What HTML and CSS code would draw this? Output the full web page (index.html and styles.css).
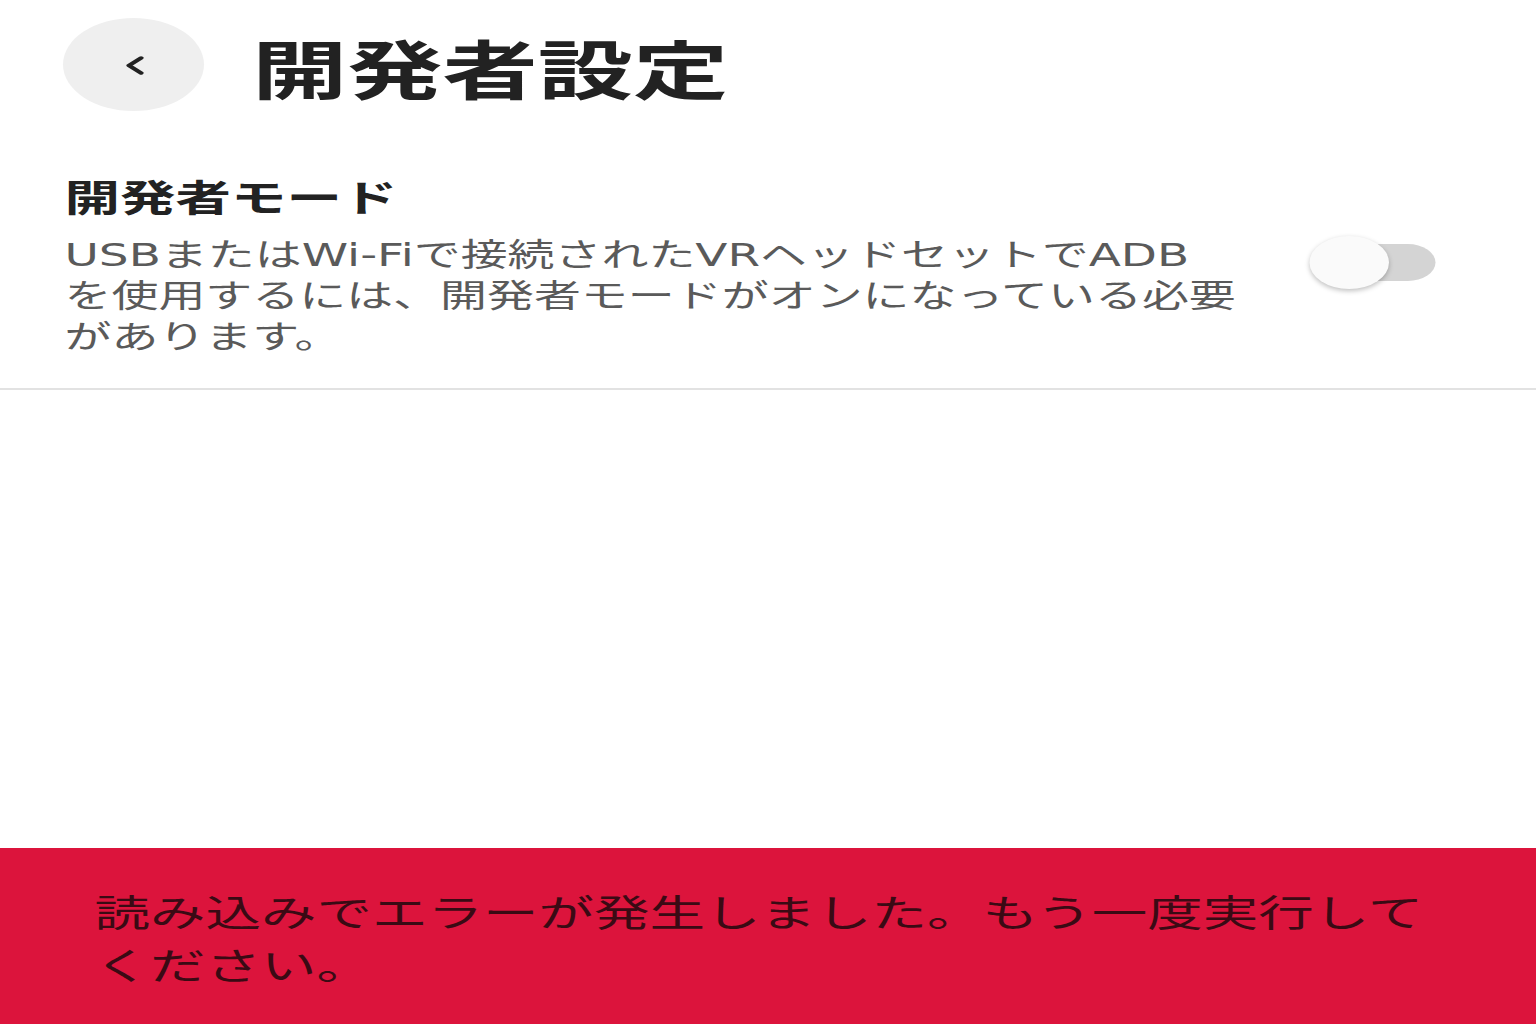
FILE: index.html
```html
<!DOCTYPE html>
<html lang="ja">
<head>
  <meta charset="UTF-8">
  <title>開発者設定</title>
  <link rel="stylesheet" href="styles.css">
</head>
<body>
<div class="screen">
  <header class="topbar">
    <button class="back-btn" aria-label="戻る">
      <svg width="16" height="20" viewBox="0 0 16 20">
        <polyline points="12,3 4,10.5 12,18" fill="none" stroke="#222" stroke-width="3.4" stroke-linecap="round" stroke-linejoin="round"/>
      </svg>
    </button>
    <h1 class="page-title">開発者設定</h1>
  </header>

  <section class="setting-row">
    <div class="setting-text">
      <h2 class="setting-name">開発者モード</h2>
      <p class="setting-desc">USBまたはWi-Fiで接続されたVRヘッドセットでADB<br>を使用するには、開発者モードがオンになっている必要があります。</p>
    </div>
    <div class="toggle">
      <span class="toggle-track"></span>
      <span class="toggle-thumb"></span>
    </div>
  </section>

  <div class="error-banner">
    <p>読み込みでエラーが発生しました。もう一度実行してください。</p>
  </div>
</div>
</body>
</html>
```

FILE: styles.css
```css
html, body {
  margin: 0;
  padding: 0;
  background: #ffffff;
  overflow: hidden;
}
.screen {
  width: 1024px;
  height: 1024px;
  transform: scaleX(1.5);
  transform-origin: 0 0;
  display: flex;
  flex-direction: column;
  font-family: "Noto Sans CJK JP", "Noto Sans", sans-serif;
  color: #222222;
}

.topbar {
  display: flex;
  align-items: flex-start;
  height: 128px;
  padding-left: 42px;
}
.back-btn {
  width: 94px;
  height: 93px;
  margin-top: 18px;
  border: none;
  border-radius: 50%;
  background: #efefef;
  display: flex;
  align-items: center;
  justify-content: center;
  padding: 0 0 0 1px;
}
.page-title {
  margin: 35px 0 0 32px;
  font-size: 63.5px;
  line-height: 1;
  font-weight: 700;
  color: #222222;
}

.setting-row {
  display: flex;
  justify-content: space-between;
  align-items: flex-start;
  padding: 44px 67px 30px 43px;
  border-bottom: 2px solid #e2e2e2;
}
.setting-text {
  width: 800px;
}
.setting-name {
  margin: 0;
  font-size: 37px;
  line-height: 48px;
  font-weight: 700;
  color: #222222;
}
.setting-desc {
  margin: 15px 0 0;
  font-family: "DejaVu Sans", "Noto Sans CJK JP", sans-serif;
  font-size: 31.3px;
  line-height: 41px;
  color: #5a5a5a;
}

.toggle {
  position: relative;
  width: 84px;
  height: 53px;
  margin-top: 64px;
  flex-shrink: 0;
}
.toggle-track {
  position: absolute;
  right: 0;
  top: 8px;
  width: 70px;
  height: 37px;
  border-radius: 19px;
  background: #d4d4d4;
}
.toggle-thumb {
  position: absolute;
  left: 0;
  top: 0;
  width: 53px;
  height: 53px;
  border-radius: 50%;
  background: #fafafa;
  box-shadow: 0 2px 4px rgba(0, 0, 0, 0.25);
}

.error-banner {
  margin-top: auto;
  height: 176px;
  box-sizing: border-box;
  padding: 37px 63px;
  background: #dc143c;
}
.error-banner p {
  margin: 0;
  font-size: 37px;
  line-height: 53px;
  color: #3a0a14;
}
```
